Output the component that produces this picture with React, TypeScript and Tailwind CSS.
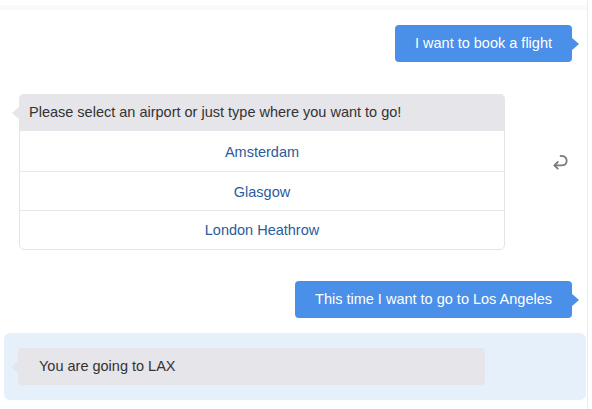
import React from "react";

function RightArrow() {
  return (
    <span className="absolute right-[-7px] top-1/2 -translate-y-1/2 w-0 h-0 border-y-[7px] border-y-transparent border-l-[8px] border-l-[#4a8fe8]" />
  );
}

function LeftArrow() {
  return (
    <span className="absolute left-[-7px] top-1/2 -translate-y-1/2 w-0 h-0 border-y-[7px] border-y-transparent border-r-[8px] border-r-[#e5e5ea]" />
  );
}

function UserBubble({ text }: { text: string }) {
  return (
    <div className="flex justify-end pr-[15px]">
      <div className="relative h-[37px] flex items-center px-5 pt-px rounded-[4px] bg-[#4a8fe8] text-white text-[14.5px]">
        {text}
        <RightArrow />
      </div>
    </div>
  );
}

function ReturnIcon() {
  return (
    <svg width="20" height="20" viewBox="0 0 18 18" fill="none" stroke="#7a7a7a" strokeWidth="1.6" strokeLinecap="round" strokeLinejoin="round">
      <path d="M9.5 3.5 C13.5 3.5 15 5.5 15 8 C15 10.5 13 12 10 12 L4 12" />
      <path d="M7 9 L4 12 L7 15" />
    </svg>
  );
}

export default function App() {
  return (
    <div
      className="w-[592px] h-[409px] bg-white overflow-hidden"
      style={{ fontFamily: '"Liberation Sans", Arial, sans-serif' }}
    >
      <div className="w-[588px] h-[409px] border-r border-[#ececec] flex flex-col">
        <div className="mt-[5px] h-[5px] bg-[#f9f9f9]" />
        <div className="mt-[15px]">
          <UserBubble text="I want to book a flight" />
        </div>
        <div className="mt-[32px] flex items-center pl-[19px]">
          <div className="w-[486px] rounded-[5px] border border-[#e3e3e3] text-[14.5px]">
            <div className="relative h-[37px] -m-px mb-0 flex items-center px-[10px] pt-px bg-[#e5e5ea] rounded-t-[5px] text-[#333]">
              Please select an airport or just type where you want to go!
              <LeftArrow />
            </div>
            <div className="h-[41px] pt-[3px] flex items-center justify-center text-[#2b5c9b] border-b border-[#e8e8e8]">
              Amsterdam
            </div>
            <div className="h-[39px] pt-[3px] flex items-center justify-center text-[#2b5c9b] border-b border-[#e8e8e8]">
              Glasgow
            </div>
            <div className="h-[38px] pt-[2px] flex items-center justify-center text-[#2b5c9b]">
              London Heathrow
            </div>
          </div>
          <div className="ml-[45px] mb-[20px]">
            <ReturnIcon />
          </div>
        </div>
        <div className="mt-[31px]">
          <UserBubble text="This time I want to go to Los Angeles" />
        </div>
        <div className="mt-[15px] ml-[4px] mr-[1px] h-[67px] rounded-[6px] bg-[#e6f0fa] flex items-center pl-[14px]">
          <div className="relative w-[467px] h-[37px] flex items-center px-[21px] pt-px rounded-[4px] bg-[#e5e5ea] text-[#333] text-[14.5px]">
            You are going to LAX
            <LeftArrow />
          </div>
        </div>
      </div>
    </div>
  );
}
